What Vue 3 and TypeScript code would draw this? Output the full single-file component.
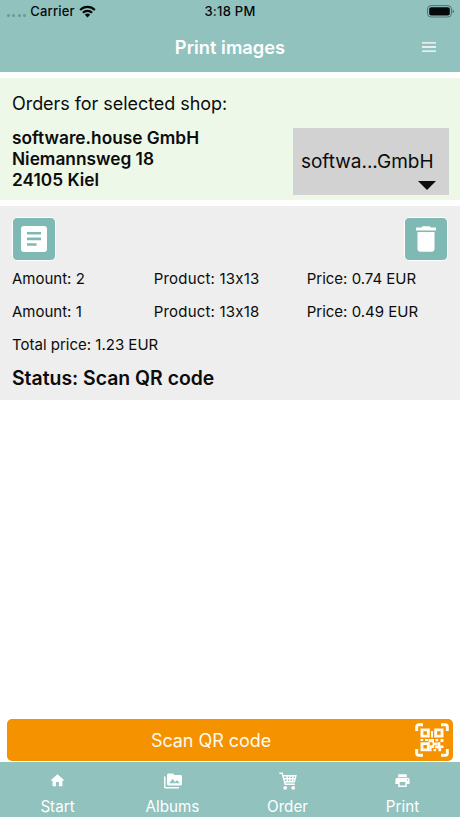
<script setup lang="ts">
interface OrderLine {
  amount: number
  product: string
  price: string
}

const lines: OrderLine[] = [
  { amount: 2, product: '13x13', price: '0.74' },
  { amount: 1, product: '13x18', price: '0.49' },
]
const address: string[] = ['software.house GmbH', 'Niemannsweg 18', '24105 Kiel']
</script>

<template>
  <div class="screen">
    <header class="header">
      <div class="status-bar">
        <div class="carrier">
          <span class="dots"><i v-for="n in 4" :key="n"></i></span>
          <span>Carrier</span>
          <svg class="wifi" viewBox="0 0 17 13">
            <path d="M.4 4.2a11.5 11.5 0 0 1 16.2 0l-1.5 1.6a9.3 9.3 0 0 0-13.2 0z" />
            <path d="M3.1 7a7.7 7.7 0 0 1 10.8 0l-1.6 1.6a5.4 5.4 0 0 0-7.6 0z" />
            <path d="M5.8 9.7a3.9 3.9 0 0 1 5.4 0l-2.7 2.8z" />
          </svg>
        </div>
        <span class="time">3:18 PM</span>
        <svg class="battery" viewBox="0 0 28 13">
          <rect x=".6" y=".6" width="23.8" height="11.4" rx="3.4" fill="none" stroke="#52706e" stroke-width="1" />
          <rect x="2.2" y="2.2" width="20.6" height="8.2" rx="1.9" />
          <path d="M25.6 4.4q1.4.5 1.4 1.9t-1.4 1.9z" fill="#52706e" />
        </svg>
      </div>
      <div class="title-bar">
        <h1>Print images</h1>
        <svg class="menu" viewBox="0 0 14 10"><path d="M0 .9h14M0 5h14M0 9.1h14" /></svg>
      </div>
    </header>

    <section class="shop">
      <h2>Orders for selected shop:</h2>
      <div class="shop-row">
        <address><div v-for="row in address" :key="row">{{ row }}</div></address>
        <button class="select">
          <span>softwa...GmbH</span>
          <svg viewBox="0 0 18 9"><path d="M0 0h18L9 9z" /></svg>
        </button>
      </div>
    </section>

    <section class="order">
      <div class="actions">
        <button class="square">
          <svg viewBox="0 0 26 26">
            <path fill-rule="evenodd" d="M3 0h20a3 3 0 0 1 3 3v20a3 3 0 0 1-3 3H3a3 3 0 0 1-3-3V3a3 3 0 0 1 3-3zM6 6v2.6h14V6zM6 11.6v2.6h14v-2.6zM6 17.2v2.6h9.6v-2.6z" />
          </svg>
        </button>
        <button class="square">
          <svg viewBox="0 0 26 26">
            <path d="M3.1 1.4h5.1L9.7.2h6.8L18 1.4h5v3.2H3.1zM4.5 6h17v16.8a3 3 0 0 1-3 3h-11a3 3 0 0 1-3-3z" />
          </svg>
        </button>
      </div>
      <div v-for="line in lines" :key="line.product" class="line">
        <span>Amount: {{ line.amount }}</span>
        <span class="product">Product: {{ line.product }}</span>
        <span>Price: {{ line.price }} EUR</span>
      </div>
      <div class="line total"><span>Total price: 1.23 EUR</span></div>
      <div class="status">Status: Scan QR code</div>
    </section>

    <button class="scan">
      <span>Scan QR code</span>
      <svg class="qr" viewBox="0 0 34 34">
        <path class="frame" d="M1.7 8V3.7a2 2 0 0 1 2-2H8M26 1.7h4.3a2 2 0 0 1 2 2V8M32.3 26v4.3a2 2 0 0 1-2 2H26M8 32.3H3.7a2 2 0 0 1-2-2V26" />
        <path fill-rule="evenodd" d="M5.5 5.5h9.300v9H5.500zM8.400 8.300v3.400h3.500V8.300zM19.200 5.500h9.300v9h-9.300zM22.100 8.300v3.400h3.500V8.300zM5.500 19.300h9.300v9H5.500zM8.400 22.100v3.400h3.500v-3.400z" />
        <path d="M16 8h2v6.500h-2zM5.500 15.900h2.700v2H5.500zM10 15.900h3v2h-3zM13.500 15.900H19v3.600h3v2.800h-2.800v2.800h-2.600v3.200h-2v-6h2.900v-3h-4zM20.500 15.900h2.700v2.400h-2.700zM25.500 15.900h3v3.200h-3zM22.300 19.300h3v3.200h3.200v2.600h-2.400v3.200h-2.700v-2.700h-3.200v-2.800h2.100zM18.500 26h2.500v2.300h-2.500z" />
      </svg>
    </button>

    <nav class="tabs">
      <a class="tab">
        <svg viewBox="0 0 24 24"><path d="M10 20v-6h4v6h5v-8h3L12 3 2 12h3v8z" /></svg>
        <span>Start</span>
      </a>
      <a class="tab albums">
        <svg viewBox="0 0 24 24"><path d="M2 6H0v5h.01L0 20c0 1.100.9 2 2 2h18v-2H2V6zm20-2h-8l-2-2H6c-1.100 0-1.990.9-1.990 2L4 16c0 1.100.9 2 2 2h16c1.100 0 2-.9 2-2V6c0-1.100-.9-2-2-2zM7 15l4.500-6 3.500 4.510 2.500-3.010L21 15H7z" /></svg>
        <span>Albums</span>
      </a>
      <a class="tab order-tab">
        <svg viewBox="0 0 18 18">
          <path class="cart" d="M.3 1.200h2.900l3 11h9.600M3.800 3.800h13.100l-1.500 6H5.500M4.500 6.800h11.700M8 4l.5 5.500M11 4v5.500M14 4l-.5 5.500" />
          <circle cx="6.2" cy="15.8" r="1.9" /><circle cx="14.2" cy="15.8" r="1.9" />
        </svg>
        <span>Order</span>
      </a>
      <a class="tab">
        <svg viewBox="0 0 24 24"><path d="M19 8H5c-1.660 0-3 1.340-3 3v6h4v4h12v-4h4v-6c0-1.660-1.340-3-3-3zm-3 11H8v-5h8v5zm3-7c-.55 0-1-.45-1-1s.45-1 1-1 1 .45 1 1-.45 1-1 1zm-1-9H6v4h12V3z" /></svg>
        <span>Print</span>
      </a>
    </nav>
  </div>
</template>

<style>
body {
  margin: 0;
  background: #fff;
}
</style>

<style scoped>
.screen {
  box-sizing: border-box;
  width: 460px;
  height: 818px;
  padding-bottom: 1px;
  display: flex;
  flex-direction: column;
  overflow: hidden;
  background: #fff;
  color: #0b0c0b;
  font-family: Inter, "Liberation Sans", sans-serif;
  font-feature-settings: "calt" 0;
}
button {
  border: 0;
  padding: 0;
  color: inherit;
  font-family: inherit;
  font-feature-settings: inherit;
}
svg {
  display: block;
  fill: currentColor;
}
.header {
  height: 71.5px;
  background: #91c2be;
}
.status-bar {
  height: 22px;
  display: grid;
  grid-template-columns: 1fr auto 1fr;
  align-items: center;
  padding: 0 5px 0 7px;
  font-size: 13px;
  font-weight: 500;
  color: #050808;
}
.carrier {
  display: flex;
  align-items: center;
  letter-spacing: 0.2px;
}
.dots {
  display: flex;
  gap: 2.4px;
  padding-top: 8px;
  margin-right: 4px;
}
.dots i {
  width: 3px;
  height: 3px;
  border-radius: 50%;
  background: #6f9693;
}
.wifi {
  width: 17px;
  height: 13px;
  margin-left: 4px;
}
.time {
  letter-spacing: 0.25px;
  margin-right: 2px;
}
.battery {
  width: 28px;
  height: 13px;
  justify-self: end;
}
.title-bar {
  height: 49px;
  display: grid;
  grid-template-columns: 1fr auto 1fr;
  align-items: center;
  padding: 0 24px;
  color: #fff;
}
h1 {
  grid-column: 2;
  margin: 0;
  font-size: 18.3px;
  font-weight: 600;
  line-height: 24px;
}
.menu {
  width: 14px;
  height: 10px;
  justify-self: end;
  stroke: #fff;
  stroke-width: 1.3;
}
.shop {
  box-sizing: border-box;
  height: 122px;
  margin-top: 6.5px;
  padding: 14px 11.5px 0 12px;
  background: #eef8e8;
}
h2 {
  margin: 0;
  font-size: 18px;
  font-weight: 400;
  line-height: 24px;
  letter-spacing: -0.05px;
}
.shop-row {
  display: flex;
  justify-content: space-between;
  align-items: flex-end;
  height: 67px;
  margin-top: 12px;
}
address {
  padding-bottom: 5px;
  font-style: normal;
  font-size: 17.3px;
  font-weight: 600;
  line-height: 21px;
}
.select {
  box-sizing: border-box;
  width: 155.5px;
  height: 67px;
  padding: 22px 13px 5px 6px;
  display: flex;
  flex-direction: column;
  justify-content: space-between;
  background: #d2d2d2;
  font-size: 19px;
  line-height: 24px;
}
.select svg {
  width: 18px;
  height: 9px;
  align-self: flex-end;
}
.order {
  box-sizing: border-box;
  height: 194px;
  margin-top: 6px;
  padding: 11px 12px 0;
  background: #eee;
}
.actions {
  display: flex;
  justify-content: space-between;
  margin-bottom: 1px;
}
.square {
  box-sizing: border-box;
  width: 44px;
  height: 44px;
  display: grid;
  place-items: center;
  border: 1px solid #fff;
  border-radius: 5px;
  background: #7fb9b4;
  color: #fff;
}
.square svg {
  width: 26px;
  height: 26px;
}
.line {
  display: grid;
  grid-template-columns: 141.7px 153px 1fr;
  height: 33px;
  line-height: 33px;
  font-size: 15px;
}
.product {
  letter-spacing: 0.2px;
}
.total {
  display: block;
  height: 34px;
}
.status {
  font-size: 19.4px;
  font-weight: 600;
  line-height: 33px;
}
.scan {
  width: 446px;
  height: 42px;
  margin: auto auto 1px 7px;
  padding: 0 4px 0 0;
  flex: none;
  box-sizing: border-box;
  display: flex;
  align-items: center;
  border-radius: 5px;
  background: #f49200;
  color: #fffaf0;
  font-size: 18px;
  letter-spacing: -0.05px;
}
.scan span {
  flex: 1;
}
.qr {
  width: 34px;
  height: 34px;
}
.frame {
  fill: none;
  stroke: currentColor;
  stroke-width: 3;
}
.tabs {
  height: 55px;
  display: grid;
  grid-template-columns: repeat(4, 1fr);
  background: #91c2be;
  color: #fff;
}
.tab {
  display: flex;
  flex-direction: column;
  align-items: center;
  justify-content: space-between;
  font-size: 15.2px;
  line-height: 20px;
  padding-top: 10px;
}
.tab svg {
  width: 17px;
  height: 17px;
}
.albums svg {
  width: 18px;
  height: 18px;
}
.order-tab svg {
  width: 18px;
  height: 18px;
}
.cart {
  fill: none;
  stroke: currentColor;
  stroke-width: 1.4;
}
</style>
